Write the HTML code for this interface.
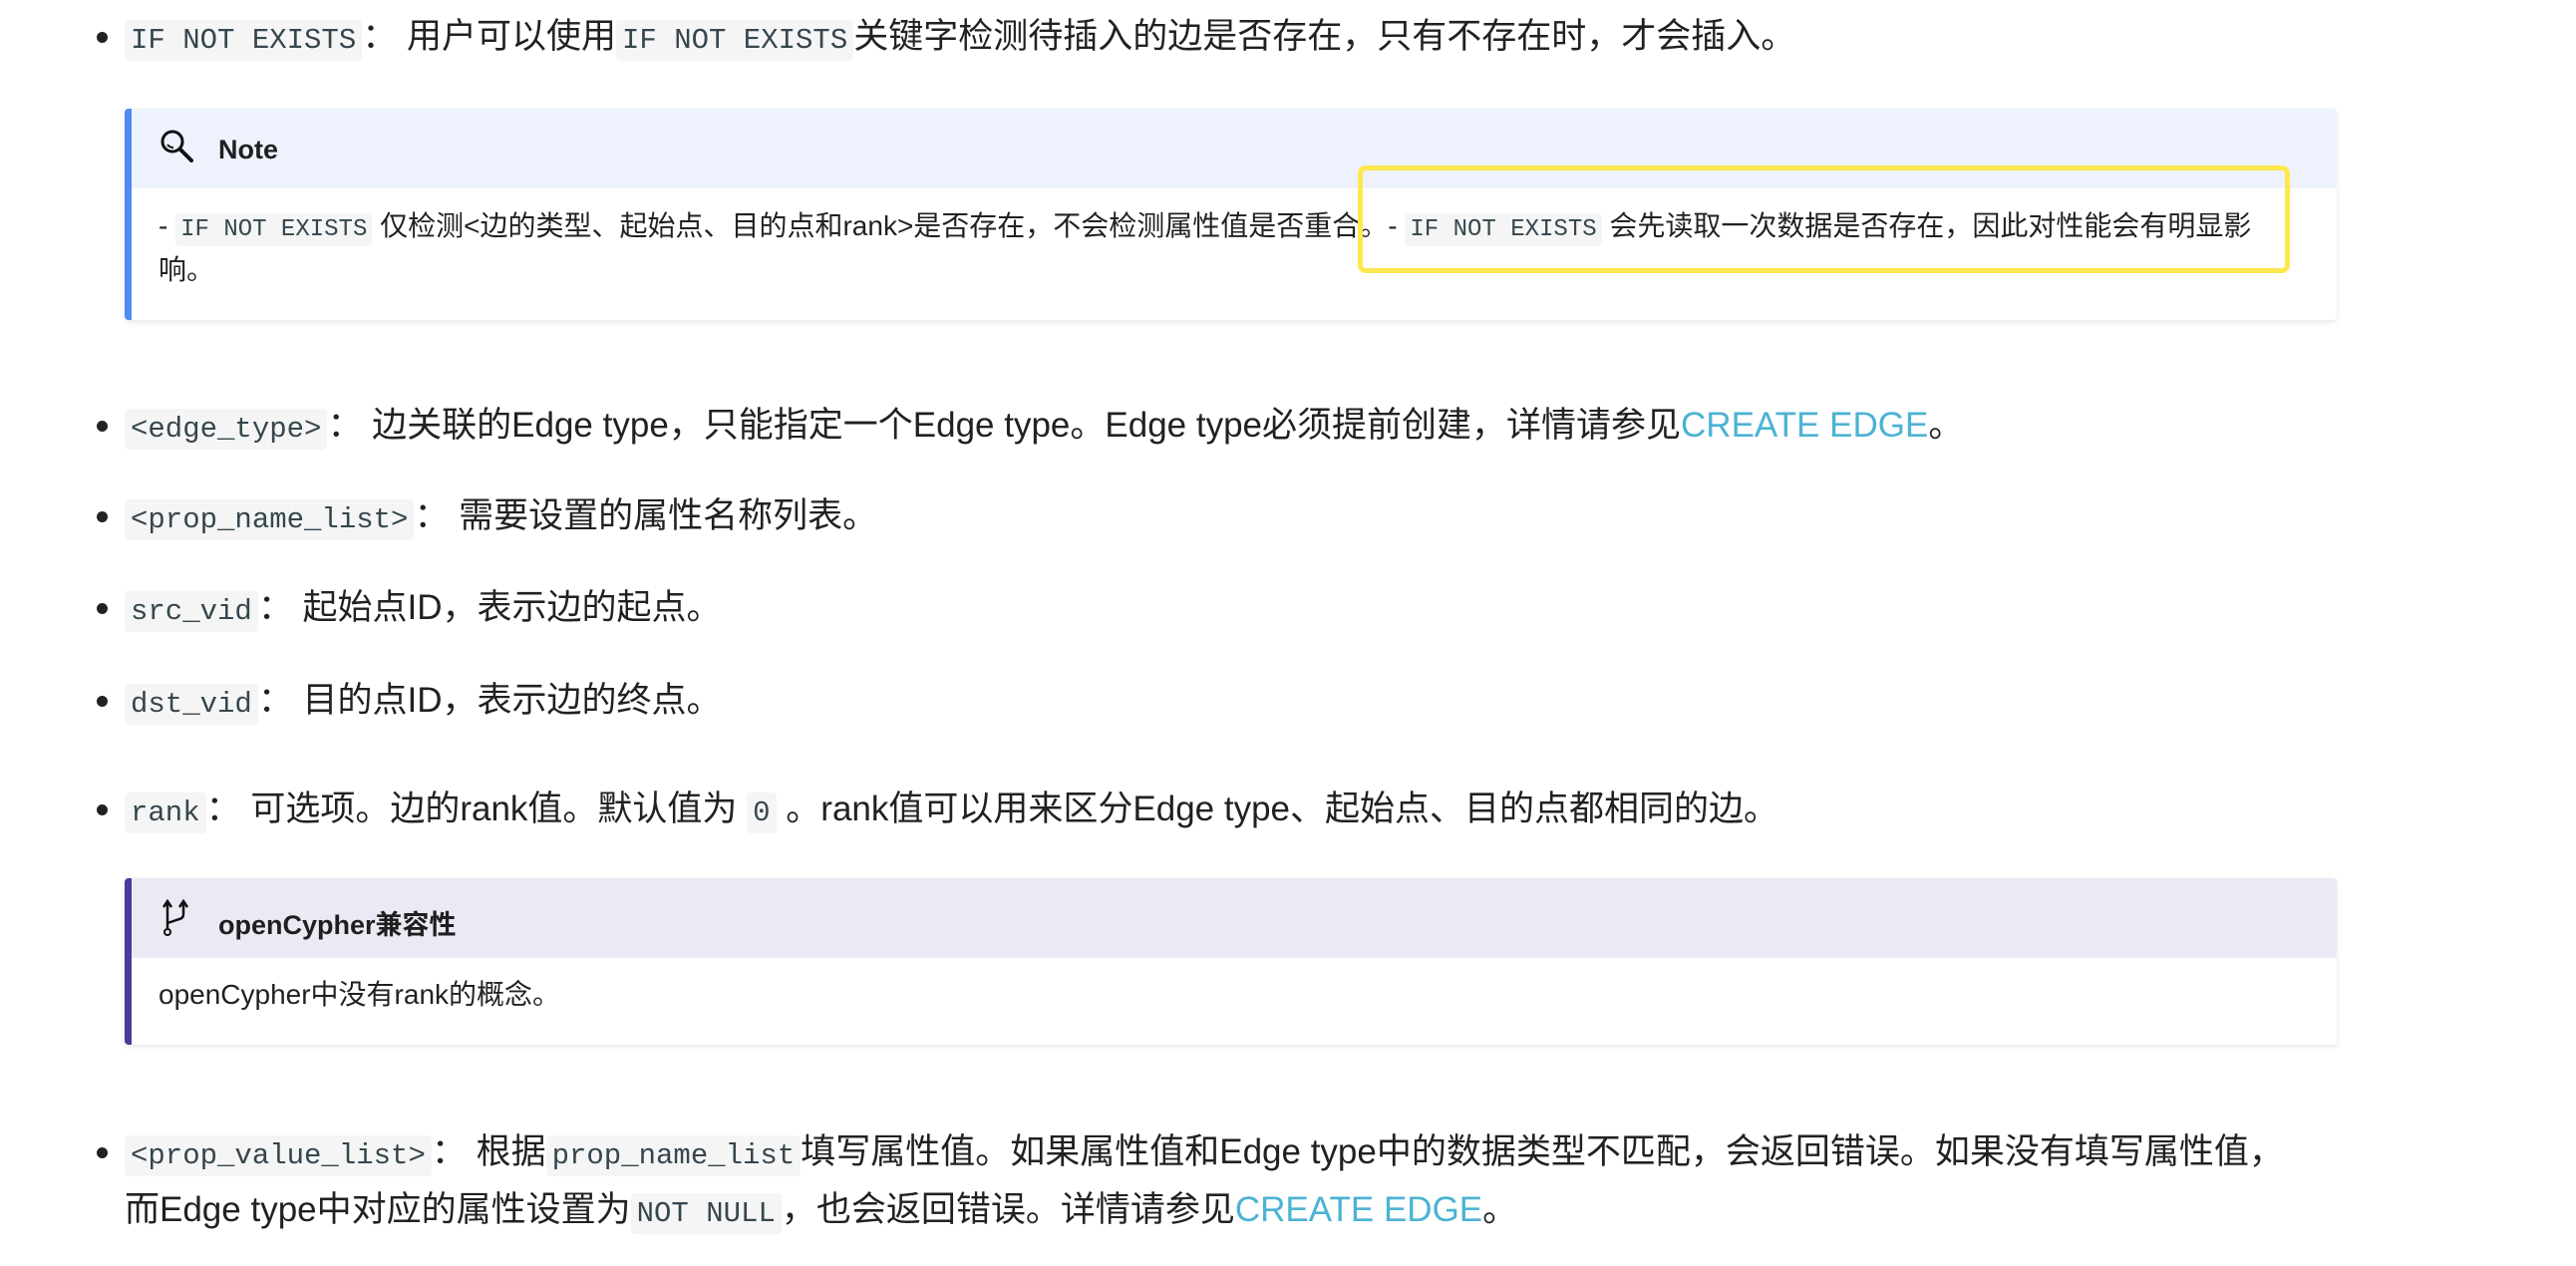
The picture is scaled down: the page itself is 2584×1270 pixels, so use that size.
<!DOCTYPE html>
<html><head><meta charset="utf-8"><style>
body{margin:0;width:2584px;height:1270px;background:#fff;position:relative;overflow:hidden;font-family:"Liberation Sans","Noto Sans CJK SC",sans-serif;color:rgba(0,0,0,.87);}
.l{position:absolute;left:125px;font-size:35px;white-space:nowrap;line-height:44px;}
.dot{position:absolute;left:97px;width:11px;height:11px;border-radius:50%;background:#222;}
code{font-family:"Liberation Mono",monospace;font-size:29px;background:#f5f5f5;color:#36464e;padding:4px 6px;border-radius:4px;}
a{color:#4cb3d4;text-decoration:none;}
.box{position:absolute;left:125px;width:2212px;background:#fff;border-radius:4px;box-shadow:0 2px 6px rgba(0,0,0,.1);overflow:hidden;}
.hd{position:absolute;left:0;top:0;right:0;height:80px;}
.tt{position:absolute;left:87px;font-weight:bold;font-size:27px;}
.bd{position:absolute;left:27px;font-size:28px;white-space:nowrap;line-height:44px;}
.bd code{font-size:24px;padding:3px 5px;}
</style></head><body>
<div class="dot" style="top:32px"></div>
<div class="l" style="top:15px"><code>IF NOT EXISTS</code>： 用户可以使用<code>IF NOT EXISTS</code>关键字检测待插入的边是否存在，只有不存在时，才会插入。</div>

<div class="box" style="top:109px;height:212px;border-left:7px solid #4f8bf0;">
 <div class="hd" style="background:#eef2fd;height:80px"></div>
 <svg style="position:absolute;left:28px;top:20px" width="36" height="36" viewBox="0 0 36 36"><circle cx="13" cy="13" r="10" fill="none" stroke="#111" stroke-width="3"/><path d="M21 21 L32 32" stroke="#111" stroke-width="4" stroke-linecap="round"/><path d="M8 16 Q10 19 14 19" fill="none" stroke="#111" stroke-width="2"/></svg>
 <div class="tt" style="top:26px">Note</div>
 <div class="bd" style="top:96px">- <code>IF NOT EXISTS</code> 仅检测&lt;边的类型、起始点、目的点和rank&gt;是否存在，不会检测属性值是否重合。- <code>IF NOT EXISTS</code> 会先读取一次数据是否存在，因此对性能会有明显影</div>
 <div class="bd" style="top:140px">响。</div>
</div>
<div style="position:absolute;left:1362px;top:166px;width:925px;height:98px;border:5px solid #fde84f;border-radius:8px;"></div>

<div class="dot" style="top:422px"></div>
<div class="l" style="top:405px"><code>&lt;edge_type&gt;</code>： 边关联的Edge type，只能指定一个Edge type。Edge type必须提前创建，详情请参见<a>CREATE EDGE</a>。</div>
<div class="dot" style="top:513px"></div>
<div class="l" style="top:496px"><code>&lt;prop_name_list&gt;</code>： 需要设置的属性名称列表。</div>
<div class="dot" style="top:605px"></div>
<div class="l" style="top:588px"><code>src_vid</code>： 起始点ID，表示边的起点。</div>
<div class="dot" style="top:698px"></div>
<div class="l" style="top:681px"><code>dst_vid</code>： 目的点ID，表示边的终点。</div>
<div class="dot" style="top:807px"></div>
<div class="l" style="top:790px"><code>rank</code>： 可选项。边的rank值。默认值为 <code>0</code> 。rank值可以用来区分Edge type、起始点、目的点都相同的边。</div>

<div class="box" style="top:881px;height:167px;border-left:7px solid #4b3a9a;">
 <div class="hd" style="background:#ebeaf4;height:80px"></div>
 <svg style="position:absolute;left:30px;top:20px" width="34" height="40" viewBox="0 0 34 40"><path d="M6 30 V4 M2 9 L6 3 L10 9 M22 4 V16 Q22 20 18 21 L6 25 M18 9 L22 3 L26 9" fill="none" stroke="#111" stroke-width="2.5"/><circle cx="6" cy="34" r="3" fill="none" stroke="#111" stroke-width="2"/></svg>
 <div class="tt" style="top:25px">openCypher兼容性</div>
 <div class="bd" style="top:95px">openCypher中没有rank的概念。</div>
</div>

<div class="dot" style="top:1151px"></div>
<div class="l" style="top:1134px"><code>&lt;prop_value_list&gt;</code>： 根据<code>prop_name_list</code>填写属性值。如果属性值和Edge type中的数据类型不匹配，会返回错误。如果没有填写属性值，</div>
<div class="l" style="top:1192px">而Edge type中对应的属性设置为<code>NOT NULL</code>，也会返回错误。详情请参见<a>CREATE EDGE</a>。</div>
</body></html>
